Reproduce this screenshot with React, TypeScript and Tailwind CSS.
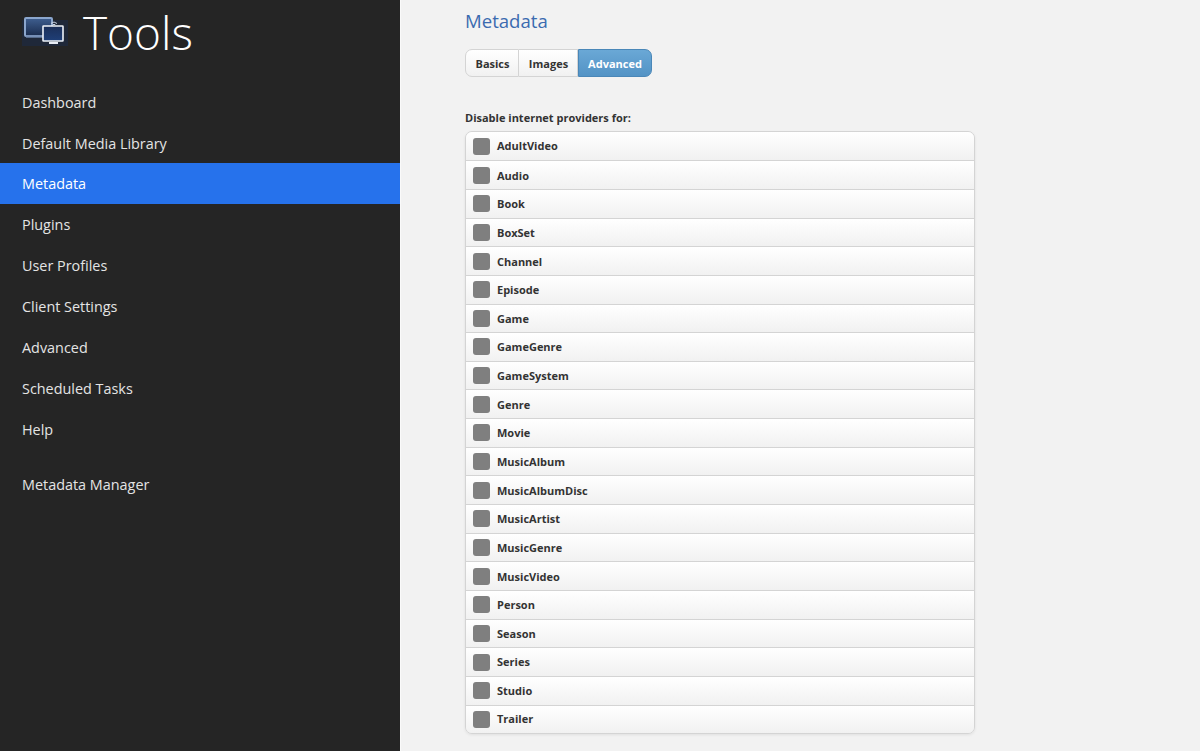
const nav = ["Dashboard", "Default Media Library", "Metadata", "Plugins", "User Profiles", "Client Settings", "Advanced", "Scheduled Tasks", "Help"];
const rows = ["AdultVideo", "Audio", "Book", "BoxSet", "Channel", "Episode", "Game", "GameGenre", "GameSystem", "Genre", "Movie", "MusicAlbum", "MusicAlbumDisc", "MusicArtist", "MusicGenre", "MusicVideo", "Person", "Season", "Series", "Studio", "Trailer"];

function Logo() {
  return (
    <svg width="46" height="40" viewBox="0 0 46 40" className="shrink-0">
      <defs>
        <linearGradient id="g" x1="0" y1="0" x2="0" y2="1">
          <stop offset="0" stopColor="#3f5f90" />
          <stop offset="1" stopColor="#1a2c4e" />
        </linearGradient>
        <linearGradient id="h" x1="0" y1="0" x2="0" y2="1">
          <stop offset="0" stopColor="#1b2f58" />
          <stop offset="1" stopColor="#1f3f78" />
        </linearGradient>
      </defs>
      <rect x="0" y="10" width="46" height="26" fill="#1d2c47" opacity="0.6" />
      <rect x="3" y="8" width="27" height="18" rx="1" fill="url(#g)" stroke="#8ba6cd" strokeWidth="2" />
      <rect x="4" y="25" width="18" height="3" fill="#6e86ad" opacity="0.7" />
      <rect x="21" y="16" width="20" height="15" rx="0.5" fill="url(#h)" stroke="#eef2f8" strokeWidth="1.6" />
      <rect x="27" y="32" width="9" height="2" fill="#e8edf5" />
      <path d="M29 13.5 q3-3 6 0 M30.5 15 q1.5-1.5 3 0" stroke="#c9d4e4" strokeWidth="1" fill="none" />
    </svg>
  );
}

export default function App() {
  return (
    <div className="flex h-[751px] w-[1200px] overflow-hidden bg-[#f2f2f2] font-['Open_Sans',sans-serif]">
      <aside className="w-[400px] shrink-0 bg-[#252525]">
        <div className="flex h-[81.4px] items-start pl-[22px]">
          <div className="mt-[10px]"><Logo /></div>
          <span className="ml-[15px] mt-[-2px] text-[46px] leading-[68px] font-light text-white">Tools</span>
        </div>
        <nav className="flex flex-col">
          {nav.map((n) => (
            <div key={n} className={`flex h-[40.85px] items-center pl-[22px] pt-[1.5px] text-[14.4px] ${n === "Metadata" ? "bg-[#2672ec] text-white" : "text-[#e4e4e4]"}`}>{n}</div>
          ))}
          <div className="mt-[15.5px] flex h-[40.85px] items-center pl-[22px] text-[14.4px] text-[#e4e4e4]">Metadata Manager</div>
        </nav>
      </aside>
      <main className="flex-1 border-l border-[#fafafa] pl-[64px]">
        <h1 className="mt-[8px] text-[18.6px] leading-[26px] text-[#3b6bb0]">Metadata</h1>
        <div className="mt-[15px] flex h-[28px] w-fit text-[11px] font-bold">
          <div className="flex w-[54px] items-center justify-center rounded-l-[7px] border border-[#d4d4d4] bg-gradient-to-b from-white to-[#f1f1f1] pl-[1px] pt-[2px] text-[#333]">Basics</div>
          <div className="flex w-[59px] items-center justify-center border-y border-r border-[#d4d4d4] bg-gradient-to-b from-white to-[#f1f1f1] pl-[1px] pt-[2px] text-[#333]">Images</div>
          <div className="flex w-[74px] items-center justify-center rounded-r-[7px] border border-[#4a87b8] bg-gradient-to-b from-[#6aa8d6] to-[#5393c5] pt-[2px] text-white">Advanced</div>
        </div>
        <div className="mt-[33px] text-[11px] font-bold leading-[16px] text-[#333]">Disable internet providers for:</div>
        <div className="mt-[4.7px] w-[510px] overflow-hidden rounded-[7px] border border-[#d4d4d4] shadow-[0_1px_3px_rgba(0,0,0,0.08)]">
          {rows.map((r, i) => (
            <div key={r} className={`flex h-[28.65px] items-center bg-gradient-to-b from-white to-[#f1f1f1] pl-[7px] last:h-[28px] ${i ? "border-t border-[#d4d4d4]" : ""}`}>
              <span className="h-[17px] w-[17px] shrink-0 rounded-[3px] bg-[#7f7f7f]" />
              <span className="ml-[7px] pt-[1.4px] text-[11px] font-bold text-[#333]">{r}</span>
            </div>
          ))}
        </div>
      </main>
    </div>
  );
}
